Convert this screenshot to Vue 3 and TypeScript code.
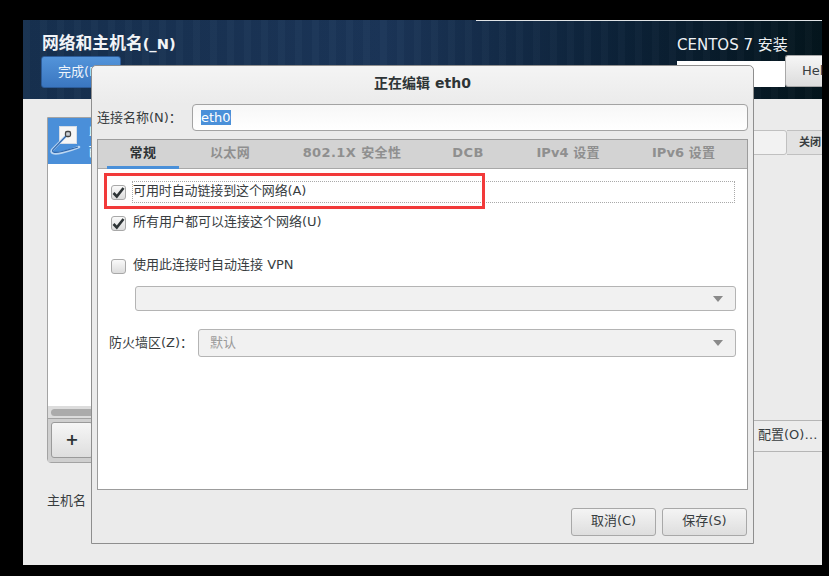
<script setup lang="ts">
const tabs: string[] = ['常规', '以太网', '802.1X 安全性', 'DCB', 'IPv4 设置', 'IPv6 设置']
</script>

<template>
  <div class="screen">
    <div class="win">
      <header class="head">
        <div class="head-left">
          <h1 class="h-title">网络和主机名<span class="paren">(_N)</span></h1>
          <button class="done">完成(D)</button>
        </div>
        <div class="head-right">
          <div class="brand">CENTOS 7 安装</div>
          <div class="kb-row">
            <div class="kb"></div>
            <button class="help">Hel</button>
          </div>
        </div>
      </header>
      <main class="body">
        <section class="left">
          <div class="card">
            <div class="item">
              <svg class="net-icon" width="40" height="46" viewBox="0 0 40 46">
                <rect x="11.5" y="8.5" width="17" height="17" fill="#f6f6f6" stroke="#d4dce6" />
                <path d="M20 16 L4 32 C2 36 8 36 14 34.5 C20 33 26 31 31 29" fill="none" stroke="#bcd6f1" stroke-width="2.6" stroke-linecap="round" />
                <path d="M20 16 L5 31.5 C3 35 8 35 14 33.5 C20 32 26 30 30 29" fill="none" stroke="#2f67ad" stroke-width="1.2" />
                <rect x="17.5" y="13.5" width="5" height="5" rx="1.5" fill="#c9ced4" stroke="#444" stroke-width="1.3" />
              </svg>
              <div class="item-text">
                <div>以太网 (eth0)</div>
                <div>已连接</div>
              </div>
            </div>
            <div class="list-fill"></div>
            <div class="hscroll"><div class="thumb"></div></div>
            <div class="tools"><button class="plus">+</button></div>
          </div>
          <div class="hostname">主机名</div>
        </section>
        <section class="right">
          <div class="status-row">
            <div class="status-fill"></div>
            <button class="close-btn">关闭</button>
          </div>
          <div class="cfg-row"><button class="cfg">配置(O)…</button></div>
        </section>
      </main>

      <div class="dialog">
        <div class="d-title">正在编辑 eth0</div>
        <div class="name-row">
          <label class="name-label">连接名称(N)：</label>
          <div class="name-input"><span class="sel">eth0</span></div>
        </div>
        <div class="notebook">
          <div class="tabs">
            <div v-for="(t, i) in tabs" :key="t" class="tab" :class="[`tab-${i}`, { active: i === 0 }]">{{ t }}</div>
          </div>
          <div class="page">
            <div class="check-row first">
              <span class="box"><svg width="13" height="13" viewBox="0 0 13 13"><path d="M1.5 7 L4.8 10.5 L11.5 2" fill="none" stroke="#2e3436" stroke-width="2.6" /></svg></span>
              <span class="focus-label">可用时自动链接到这个网络(A)</span>
            </div>
            <div class="check-row second">
              <span class="box"><svg width="13" height="13" viewBox="0 0 13 13"><path d="M1.5 7 L4.8 10.5 L11.5 2" fill="none" stroke="#2e3436" stroke-width="2.6" /></svg></span>
              <span class="plain-label">所有用户都可以连接这个网络(U)</span>
            </div>
            <div class="check-row third">
              <span class="box"></span>
              <span class="plain-label">使用此连接时自动连接 VPN</span>
            </div>
            <div class="combo vpn"><span class="arrow"></span></div>
            <div class="zone-row">
              <span class="zone-label">防火墙区(Z)：</span>
              <div class="combo zone"><span class="zone-val">默认</span><span class="arrow"></span></div>
            </div>
          </div>
        </div>
        <div class="actions">
          <button class="act">取消(C)</button>
          <button class="act">保存(S)</button>
        </div>
      </div>

      <div class="redbox"></div>
    </div>
  </div>
</template>

<style>
html, body { margin: 0; background: #000; }
</style>

<style scoped>
.screen {
  width: 829px;
  height: 576px;
  background: #000;
  padding: 20px 7px 11px 23px;
  box-sizing: border-box;
  overflow: hidden;
  font-family: "DejaVu Sans", "Noto Sans CJK SC", sans-serif;
  font-size: 13px;
  line-height: 16px;
  color: #383d3f;
}
.win {
  position: relative;
  width: 799px;
  height: 545px;
  background: #ebebeb;
  display: flex;
  flex-direction: column;
}
button { font-family: inherit; font-size: 13px; line-height: 16px; color: #383d3f; margin: 0; padding: 0; }
.head {
  height: 79px;
  flex: none;
  display: flex;
  justify-content: space-between;
  box-sizing: border-box;
  background:
    repeating-linear-gradient(90deg, rgba(255,255,255,.018) 0 7px, rgba(0,0,0,.018) 7px 17px),
    linear-gradient(90deg, #16304f 0%, #1b3558 45%, #0c2238 75%, #04151d 100%);
  position: relative;
}
.head::before {
  content: "";
  position: absolute;
  left: 453px;
  right: 0;
  top: 0;
  height: 1px;
  background: #dfe3e6;
}
.head-left { padding: 13px 0 0 18px; }
.h-title {
  margin: 0 0 2px;
  padding-left: 1px;
  font-size: 16.8px;
  line-height: 20px;
  font-weight: 700;
  color: #f2f4f7;
}
.paren { font-size: 14.6px; }
.done {
  display: block;
  width: 80px;
  height: 32px;
  border: 1px solid #2c5c9a;
  border-radius: 3px;
  background: linear-gradient(#5394da, #3a76c0);
  color: #eef4fb;
  text-align: left;
  padding-left: 16px;
}
.head-right { width: 145px; padding-top: 15px; box-sizing: border-box; }
.brand { font-size: 15px; line-height: 20px; color: #eef1f4; white-space: nowrap; }
.kb-row { display: flex; }
.kb { width: 108px; height: 26px; margin-top: 6px; background: #fff; flex: none; }
.help {
  width: 37px;
  height: 32px;
  flex: none;
  border: 1px solid #a8a8a8;
  border-right: 0;
  border-radius: 3px 0 0 3px;
  background: linear-gradient(#f6f6f6, #dcdcdc);
  text-align: left;
  padding-left: 16px;
  white-space: nowrap;
}
.body { flex: 1; display: flex; min-height: 0; }
.left { width: 300px; padding: 18px 0 0 24px; box-sizing: border-box; flex: none; }
.card {
  width: 230px;
  height: 346px;
  box-sizing: border-box;
  border: 1px solid #a3a3a3;
  border-radius: 0 0 4px 4px;
  display: flex;
  flex-direction: column;
  background: #fff;
}
.item { height: 46px; background: #4a8fd9; flex: none; display: flex; }
.net-icon { display: block; flex: none; }
.item-text { color: #fff; padding-top: 4px; white-space: nowrap; line-height: 20px; }
.list-fill { flex: 1; }
.hscroll {
  height: 12px;
  background: #dcdcdc;
  border-bottom: 1px solid #a3a3a3;
  padding: 0 3px;
  display: flex;
  align-items: center;
}
.thumb { width: 120px; height: 7px; border-radius: 4px; background: #ababab; }
.tools { height: 43px; background: #cfcfcf; padding: 3px; box-sizing: border-box; flex: none; }
.plus {
  display: block;
  width: 42px;
  height: 36px;
  border: 1px solid #9a9a9a;
  border-radius: 3px;
  background: linear-gradient(#f6f6f6, #dedede);
  font-size: 16px;
  line-height: 30px;
  font-weight: 700;
  text-align: center;
  color: #2e3436;
}
.hostname { margin-top: 30px; }
.right { flex: 1; display: flex; flex-direction: column; padding-top: 31px; }
.status-row { display: flex; height: 25px; }
.status-fill { flex: 1; background: #f2f2f2; border: 1px solid #c0c0c0; border-radius: 3px; }
.close-btn {
  width: 35px;
  flex: none;
  border: 0;
  border-top: 1px solid #c0c0c0;
  border-bottom: 1px solid #c0c0c0;
  background: #e2e2e2;
  font-size: 11px;
  font-weight: 700;
  text-align: left;
  padding-left: 12px;
  white-space: nowrap;
}
.cfg-row { display: flex; justify-content: flex-end; margin-top: 265px; }
.cfg {
  width: 68px;
  height: 32px;
  border: 0;
  border-top: 1px solid #b5b5b5;
  border-bottom: 1px solid #b5b5b5;
  background: #ececec;
  white-space: nowrap;
  text-align: left;
  padding-left: 4px;
  padding-bottom: 2px;
}
.dialog {
  position: absolute;
  left: 68px;
  top: 45px;
  width: 663px;
  height: 479px;
  box-sizing: border-box;
  border: 1px solid #8e8e8e;
  border-radius: 5px 5px 0 0;
  background: #ebebeb;
  display: flex;
  flex-direction: column;
  padding: 0 5px;
}
.d-title {
  height: 38px;
  line-height: 34px;
  text-align: center;
  font-weight: 700;
  font-size: 14px;
  color: #2e3436;
  flex: none;
  margin: 0 -5px;
  background: linear-gradient(#f4f4f4, #ebebeb);
  border-radius: 5px 5px 0 0;
}
.name-row { display: flex; align-items: center; height: 27px; flex: none; }
.name-label { width: 95px; flex: none; white-space: nowrap; }
.name-input {
  flex: 1;
  height: 27px;
  box-sizing: border-box;
  border: 1px solid #a3a3a3;
  border-radius: 4px;
  background: linear-gradient(#f7f7f7, #fff);
  padding-left: 8px;
  line-height: 25px;
}
.sel { background: #4a90d9; color: #fff; display: inline-block; line-height: 15px; }
.notebook {
  margin-top: 8px;
  height: 351px;
  flex: none;
  box-sizing: border-box;
  border: 1px solid #9c9c9c;
  display: flex;
  flex-direction: column;
}
.tabs {
  height: 29px;
  flex: none;
  background: #d3d3d3;
  border-bottom: 1px solid #a8a8a8;
  box-sizing: border-box;
  display: flex;
  align-items: stretch;
  padding-left: 9px;
  font-weight: 700;
  color: #8f8f8f;
  letter-spacing: .4px;
}
.tab { display: flex; align-items: center; justify-content: center; white-space: nowrap; box-sizing: border-box; padding-bottom: 2px; }
.tab-0 { width: 72px; }
.tab-1 { width: 102px; }
.tab-2 { width: 142px; }
.tab-3 { width: 90px; }
.tab-4 { width: 110px; letter-spacing: .1px; }
.tab-5 { width: 121px; letter-spacing: .1px; }
.tab.active { color: #2e3436; border-bottom: 3px solid #4a90d9; margin-bottom: -1px; padding-bottom: 0; }
.page { flex: 1; background: #fff; padding-left: 13px; }
.check-row { display: flex; align-items: center; }
.first { margin-top: 12px; height: 22px; margin-right: 12px; }
.second { margin-top: 9px; height: 22px; }
.third { margin-top: 21px; height: 22px; }
.box {
  width: 15px;
  height: 15px;
  box-sizing: border-box;
  border: 1px solid #a8a8a8;
  border-radius: 3px;
  background: linear-gradient(#fafafa, #dcdcdc);
  display: flex;
  align-items: center;
  justify-content: center;
  flex: none;
  margin-right: 7px;
}
.focus-label {
  flex: 1;
  height: 22px;
  line-height: 18px;
  box-sizing: border-box;
  border: 1px dotted #a9a9a9;
  margin-left: -1px;
  letter-spacing: -.12px;
}
.plain-label { white-space: nowrap; padding-bottom: 3px; }
.combo {
  height: 25px;
  box-sizing: border-box;
  border: 1px solid #b4b4b4;
  border-radius: 3px;
  background: #f1f1f1;
  position: relative;
}
.vpn { margin: 9px 11px 0 24px; }
.arrow {
  position: absolute;
  right: 12px;
  top: 50%;
  margin-top: -3px;
  width: 0;
  height: 0;
  border-left: 5px solid transparent;
  border-right: 5px solid transparent;
  border-top: 6px solid #8a8a8a;
}
.zone-row { display: flex; align-items: center; margin: 18px 11px 0 -2px; }
.zone-label { width: 89px; flex: none; white-space: nowrap; padding-bottom: 1px; }
.zone { flex: 1; height: 28px; line-height: 26px; padding-left: 11px; color: #9a9a9a; }
.actions { display: flex; justify-content: flex-end; gap: 6px; margin-top: 18px; padding-right: 1px; }
.act {
  width: 85px;
  height: 28px;
  border: 1px solid #a8a8a8;
  border-radius: 3px;
  background: linear-gradient(#f4f4f4, #dedede);
  padding-bottom: 2px;
}
.redbox {
  position: absolute;
  left: 81px;
  top: 153px;
  width: 381px;
  height: 36px;
  box-sizing: border-box;
  border: 3px solid #f23a3a;
}
</style>
